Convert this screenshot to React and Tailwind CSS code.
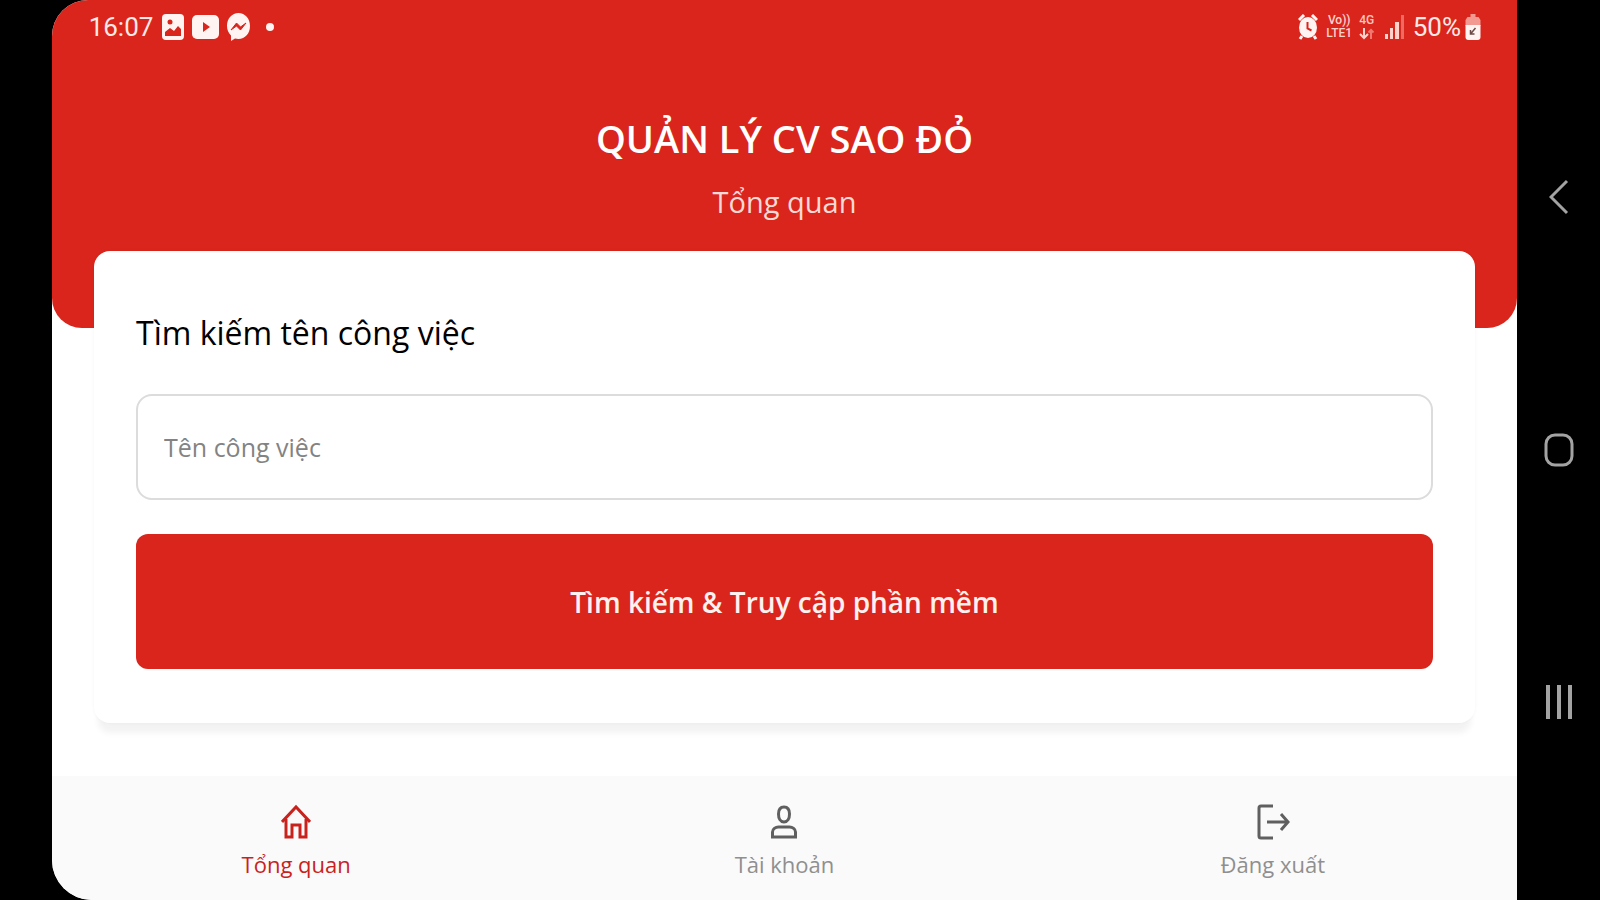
function StatusBar() {
  return (
    <div className="flex h-[54px] items-center justify-between pl-9 pr-9 text-[#ffe9e6]">
      <div className="flex items-center gap-2">
        <span className="w-[66px] font-[Roboto,sans-serif] text-[26px] leading-8">16:07</span>
        <svg width="22" height="28" viewBox="0 0 22 28" aria-hidden="true">
          <rect x="0" y="1" width="22" height="26" rx="4" fill="#fff4f1" />
          <circle cx="8" cy="9" r="2.5" fill="#d9251c" />
          <path d="M3 23v-4l5-4 4 3 4-5 3 3v7z" fill="#d9251c" />
        </svg>
        <svg width="27" height="24" viewBox="0 0 27 24" aria-hidden="true">
          <rect x="0" y="0" width="27" height="24" rx="5" fill="#fff4f1" />
          <path d="M11 7l7 5-7 5z" fill="#d9251c" />
        </svg>
        <svg width="23" height="28" viewBox="0 0 23 28" aria-hidden="true">
          <path d="M11.500 0C5 0 0 5.500 0 13c0 4 1.500 7 4 9.500V28l4-2.500c1 .3 2.200.5 3.500.5C18 26 23 20.500 23 13S18 0 11.500 0z" fill="#fff4f1" />
          <path d="M4 17l5.500-7 4 4 5.500-4-5.500 7-4-4z" fill="#d9251c" stroke="#d9251c" />
        </svg>
        <span className="ml-2 size-2 rounded-full bg-[#fff4f1]" />
      </div>
      <div className="flex items-center">
        <svg width="20" height="26" viewBox="0 0 20 26" aria-hidden="true">
          <path d="M1 6l5-5M19 6l-5-5M4 22l-2 3M16 22l2 3" stroke="#fff4f1" strokeWidth="3" />
          <ellipse cx="10" cy="13.500" rx="9" ry="10.500" fill="#fff4f1" />
          <path d="M9.500 8v6.500l4 2" fill="none" stroke="#d9251c" strokeWidth="2" />
        </svg>
        <div className="ml-2 flex w-[27px] flex-col items-center font-[Roboto,sans-serif] text-[12px] font-medium leading-[13px] text-[#ffd2cc]">
          <span>Vo))</span>
          <span>LTE1</span>
        </div>
        <div className="ml-1 flex w-[20px] flex-col items-center font-[Roboto,sans-serif] text-[12px] font-medium leading-[13px] text-[#ffc4bd]">
          <span>4G</span>
          <svg width="16" height="13" viewBox="0 0 16 13" aria-hidden="true">
            <path d="M5 1v9M1 7l4 4 4-4" fill="none" stroke="#ffd2cc" strokeWidth="2" />
            <path d="M12 12V3M9.500 5.500L12 3l2.500 2.500" fill="none" stroke="#f0786f" strokeWidth="2" />
          </svg>
        </div>
        <svg className="ml-2" width="20" height="24" viewBox="0 0 20 24" aria-hidden="true">
          <path d="M0 19h3v5H0zM5 13h3v11H5zM10 7h4v17h-4z" fill="#ffd2cc" />
          <path d="M16 0h3v24h-3z" fill="#ef6a61" />
        </svg>
        <span className="ml-2 font-[Roboto,sans-serif] text-[26px] leading-8">50%</span>
        <svg className="ml-1" width="16" height="28" viewBox="0 0 15 28" aria-hidden="true">
          <path d="M5 1h5v3h3l2 3v6H0V7l2-3h3z" fill="#f29a92" />
          <path d="M0 12h15v12q0 3-3 3H3q-3 0-3-3z" fill="#fff4f1" />
          <path d="M5 21l5-6M5 17v4h4" fill="none" stroke="#6b4a48" strokeWidth="1.500" />
        </svg>
      </div>
    </div>
  );
}

function HomeIcon() {
  return (
    <svg width="30" height="36" viewBox="0 0 30 36" fill="none" stroke="currentColor" strokeWidth="3" aria-hidden="true">
      <path d="M1 18L15 3l14 15" />
      <path d="M5 15v18h6V21h8v12h6V15" />
    </svg>
  );
}

function UserIcon() {
  return (
    <svg width="30" height="36" viewBox="0 0 30 36" fill="none" stroke="currentColor" strokeWidth="3" aria-hidden="true">
      <path d="M15 3c3.500 0 5.500 2.500 5.500 7S18.500 18 15 18s-5.500-3.500-5.500-8S11.500 3 15 3z" />
      <path d="M3.500 33v-5c0-3 3-5 6-5h11c3 0 6 2 6 5v5z" />
    </svg>
  );
}

function ExitIcon() {
  return (
    <svg width="34" height="36" viewBox="0 0 34 36" fill="none" stroke="currentColor" strokeWidth="3" aria-hidden="true">
      <path d="M17 2H5Q3 2 3 4v28q0 2 2 2h12" />
      <path d="M11 18h21M25 10l7 8-7 8" />
    </svg>
  );
}

const tabs = [
  { label: "Tổng quan", Icon: HomeIcon, item: "text-[#c9221d]", text: "font-medium" },
  { label: "Tài khoản", Icon: UserIcon, item: "text-[#5f5f5f]", text: "text-[#8f8f8f]" },
  { label: "Đăng xuất", Icon: ExitIcon, item: "text-[#5f5f5f]", text: "text-[#8f8f8f]" },
];

function SystemNav() {
  return (
    <aside className="flex w-[83px] shrink-0 flex-col items-center justify-between pb-[178px] pt-[177px] text-[#a3a3a3]">
      <button type="button" aria-label="Back" className="flex h-10 w-10 items-center justify-center">
        <svg width="20" height="36" viewBox="0 0 20 36" fill="none" stroke="currentColor" strokeWidth="3">
          <path d="M18 2L2 18l16 16" />
        </svg>
      </button>
      <button type="button" aria-label="Home" className="flex h-10 w-10 items-center justify-center">
        <svg width="30" height="34" viewBox="0 0 30 34" fill="none" stroke="currentColor" strokeWidth="3">
          <rect x="2" y="2" width="26" height="30" rx="9" />
        </svg>
      </button>
      <button type="button" aria-label="Recent apps" className="flex h-10 w-10 items-center justify-center">
        <svg width="28" height="34" viewBox="0 0 28 34" fill="none" stroke="currentColor" strokeWidth="4">
          <path d="M3 0v34M14 0v34M25 0v34" />
        </svg>
      </button>
    </aside>
  );
}

export default function App() {
  return (
    <div className="flex min-h-screen bg-black pl-[52px] font-['Open_Sans','Noto_Sans',sans-serif]">
      <div className="flex min-w-0 flex-1 flex-col overflow-hidden rounded-bl-[40px] rounded-tl-[36px] bg-white">
        <header className="h-[328px] shrink-0 rounded-b-[30px] bg-[#da251c] text-center">
          <StatusBar />
          <h1 className="mt-[52px] text-[38px] font-semibold leading-[64px] text-white">QUẢN LÝ CV SAO ĐỎ</h1>
          <p className="text-[29px] leading-[64px] text-[#fbd9d6]">Tổng quan</p>
        </header>
        <main className="flex-1 px-[42px]">
          <form
            className="relative -mt-[77px] rounded-[16px] bg-white px-[42px] pb-[54px] pt-[54px] shadow-[0_14px_6px_-4px_rgba(0,0,0,0.05),0_0_4px_rgba(0,0,0,0.03)]"
            onSubmit={(e) => e.preventDefault()}
          >
            <label htmlFor="job" className="block text-[32px] font-medium leading-[56px] text-black">
              Tìm kiếm tên công việc
            </label>
            <input
              id="job"
              type="text"
              placeholder="Tên công việc"
              className="mt-[33px] block h-[106px] w-full rounded-[16px] border-2 border-[#dcdcdc] bg-white px-[26px] text-[25px] text-[#333] outline-none placeholder:text-[#838383]"
            />
            <button
              type="submit"
              className="mt-[34px] block h-[135px] w-full rounded-[12px] bg-[#da251c] text-[28px] font-semibold text-[#fff1ef]"
            >
              Tìm kiếm &amp; Truy cập phần mềm
            </button>
          </form>
        </main>
        <nav className="grid h-[124px] shrink-0 grid-cols-3 bg-[#fafafa]">
          {tabs.map(({ label, Icon, item, text }) => (
            <a key={label} href="#" className={`flex flex-col items-center pt-7 ${item}`}>
              <Icon />
              <span className={`mt-2 text-[22px] leading-8 ${text}`}>{label}</span>
            </a>
          ))}
        </nav>
      </div>
      <SystemNav />
    </div>
  );
}
